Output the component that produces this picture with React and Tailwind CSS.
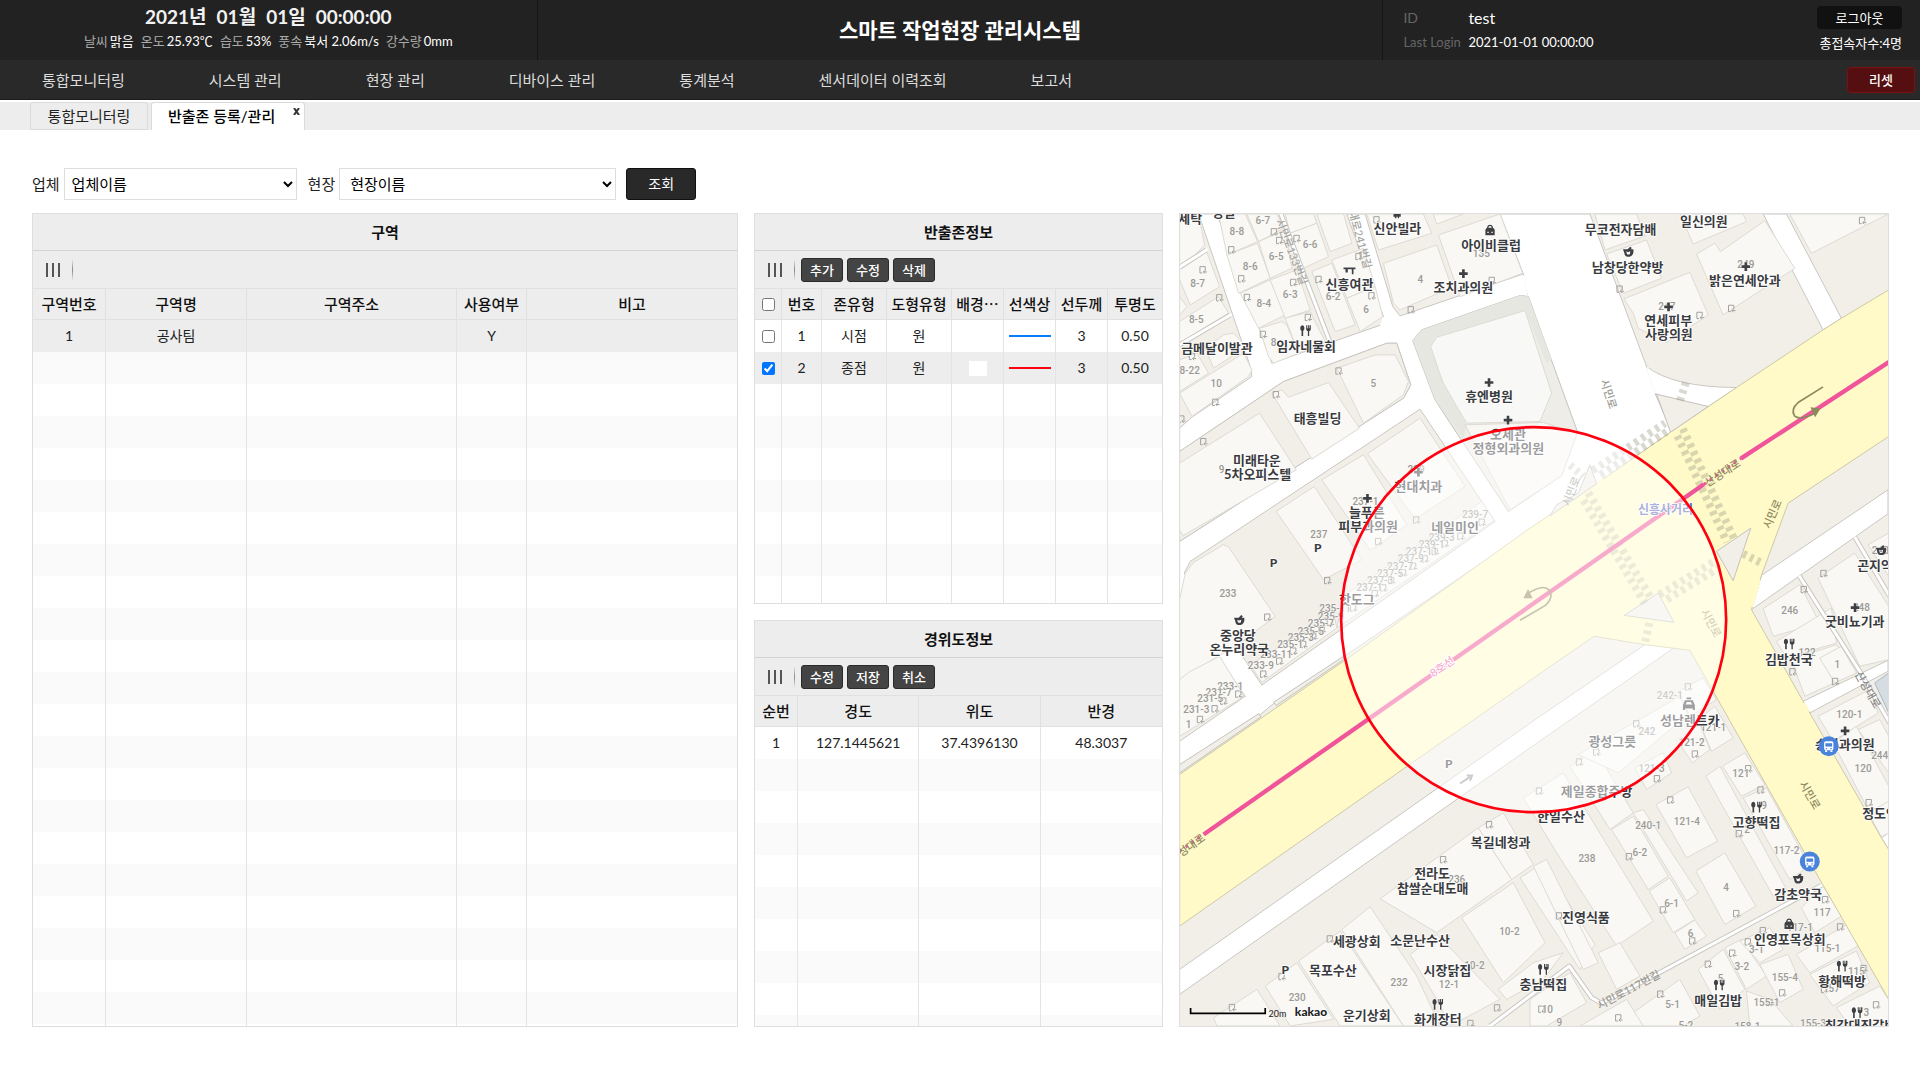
import { useState } from "react";

const menus = [
  "통합모니터링",
  "시스템 관리",
  "현장 관리",
  "디바이스 관리",
  "통계분석",
  "센서데이터 이력조회",
  "보고서",
];

const weather = [
  ["날씨", "맑음"],
  ["온도", "25.93℃"],
  ["습도", "53%"],
  ["풍속", "북서 2.06m/s"],
  ["강수량", "0mm"],
];

const initialZones = [
  { no: 1, type: "시점", shape: "원", bg: "", line: "#0a7cff", width: 3, opacity: "0.50", checked: false },
  { no: 2, type: "종점", shape: "원", bg: "#ffffff", line: "#ff0010", width: 3, opacity: "0.50", checked: true },
];

// ---------------------------------------------------------------- 지도 데이터

const roads = [
  // 시민로 (북쪽)
  "990,42 1260,42 1430,500 1455,580 1505,695 1225,892 1140,950 1110,970 1110,872 1175,828 1222,695 1075,290 1060,222",
  // 산성대로 옆길
  "28,1625 225,1490 275,1456 975,965 1015,935 1175,828 1225,892 520,1372 310,1512 270,1545 28,1702",
  // 골목길
  "28,1025 700,595 722,555 680,430 650,430 340,545 28,755 28,685 65,652 245,530 240,500 85,42 140,42 305,490 475,430 630,376 640,350 530,42 585,42 668,320 690,348 1060,222 1075,290 1050,287 755,390 728,422 795,600 1015,935 975,965 750,628 430,840 60,1085 42,1120 100,1200 275,1456 225,1490 70,1262 28,1200",
  "1780,42 1850,42 2015,355 1960,390",
  "1775,1127 2155,870 2155,942 1745,1230",
  "1900,1505 2155,1382 2155,1415 1920,1540",
  // 남쪽 길
  "28,2310 1110,1550 1430,1332 1512,1345 1080,1645 28,2385",
  "2135,1915 2157,1900 2157,1950",
];

const westBlock = "28,755 340,545 650,430 680,430 722,555 700,595 28,1025";

const yellowRoad =
  "28,1725 520,1385 1080,985 1225,890 1505,695 1700,563 1960,390 2015,355 2160,268 2160,708 1855,910 1775,1127 1745,1230 1900,1505 1920,1540 2135,1915 2160,1955 2160,2405 1950,2040 1560,1352 1425,1335 1272,1310 1110,1422 700,1708 28,2180";

const islands = [
  "1743,985 1640,1055 1690,1143",
  "1363,1247 1465,1180 1512,1268",
  "1460,583 1615,620 1502,697",
  "1260,795 1280,852 1225,890 1140,948 1160,915 1225,880",
  "310,1508 520,1370 520,1380 318,1518",
  "28,1695 266,1542 272,1552 28,1720",
];

const buildings = [
  "28,42 85,42 103,135 70,170 28,200",
  "28,205 108,152 148,260 60,315 28,240",
  "28,365 145,290 175,340 28,430",
  "28,290 50,320 28,345",
  "105,445 160,405 190,400 230,440 130,505",
  "28,480 80,460 115,520 28,575",
  "28,580 220,460 245,510 235,530 65,650",
  "145,42 225,42 262,125 170,165",
  "230,42 320,42 340,85 265,125",
  "170,165 262,130 300,235 205,280",
  "265,125 345,90 365,205 300,235",
  "210,280 300,240 345,345 265,385",
  "300,240 380,210 420,330 345,355",
  "268,385 335,365 350,375 385,460 310,490 295,470",
  "345,355 420,335 465,425 385,460",
  "345,42 430,42 440,70 360,100",
  "360,100 440,70 475,170 400,205",
  "440,42 520,42 545,130 480,155",
  "425,215 485,190 555,375 495,395",
  "485,180 580,145 615,260 530,295",
  "530,295 615,260 638,350 570,395",
  "590,42 760,42 785,100 625,150",
  "640,190 800,135 845,262 690,330 670,310",
  "790,42 880,42 800,72",
  "805,105 990,42 1058,220 870,290",
  "500,505 615,465 675,465 715,545 700,585 580,670",
  "305,580 335,570 355,592 475,548 568,685 425,778",
  "28,790 268,640 378,810 38,1008 28,990",
  "592,762 750,655 885,860 735,958",
  "455,840 580,765 710,975 600,1052",
  "318,935 432,860 575,1080 460,1140",
  "45,1120 70,1088 160,1035 175,1042 315,1250 210,1330 28,1440 28,1200",
  "28,1440 55,1418 148,1370 222,1490 28,1610",
  "240,1395 490,1240 500,1285 275,1448",
  "520,1190 935,905 972,962 500,1285",
  "1275,42 1400,42 1425,108 1305,150",
  "1310,162 1430,120 1475,235 1360,280",
  "1362,297 1560,217 1615,345 1490,428 1405,385 1390,340",
  "1530,42 1720,42 1730,65 1570,132",
  "1580,162 1635,130 1652,155 1785,62 1875,205 1660,345",
  "1860,42 2155,42 1925,160",
  "1780,1227 1890,1155 1950,1270 1810,1310",
  "1945,1135 2055,1060 2157,1220 2157,1380 2070,1400",
  "2095,1035 2157,1000 2157,1130",
  "1820,1325 1985,1225 2000,1330 1850,1375",
  "1865,1380 2000,1335 2060,1420 1905,1490",
  "1950,1375 2015,1340 2060,1420 1995,1450",
  "1945,1550 2100,1470 2125,1540 1990,1625",
  "1990,1630 2060,1580 2157,1760 2157,1820 2095,1830",
  "2065,1590 2130,1560 2157,1610 2157,1720",
  "2095,1840 2157,1805 2157,1900 2135,1912",
  // 남쪽 상가
  "630,2098 925,1885 1025,2040 800,2200",
  "925,1885 1000,1840 1090,1995 1025,2040",
  "1050,2035 1120,1990 1275,2235 1230,2310",
  "875,2155 1030,2050 1125,2230 1000,2350",
  "515,2190 600,2122 740,2330 810,2480 700,2480",
  "385,2285 510,2195 700,2480 510,2480",
  "285,2360 380,2290 490,2460 360,2480",
  "130,2455 260,2370 330,2480 140,2480",
  "720,2265 800,2205 990,2400 840,2480 800,2400",
  "985,2370 1090,2290 1180,2260 1120,2340 1010,2400",
  "1060,1795 1180,1720 1450,2165 1340,2240 1160,1960",
  "1200,1700 1275,1650 1390,1840 1320,1890",
  "1225,1665 1530,1490 1555,1545 1345,1720",
  "1525,1475 1600,1435 1640,1500 1560,1550",
  "1585,1560 1635,1520 1690,1615 1625,1655",
  "1520,1620 1590,1575 1620,1650 1568,1690",
  "1395,1705 1480,1660 1505,1720 1430,1770",
  "1658,1700 1725,1660 1785,1755 1715,1790",
  "1458,1815 1555,1762 1643,1925 1550,1975",
  "1608,1730 1650,1700 1850,2070 1810,2090",
  "1720,1795 1790,1765 1920,2000 1860,2040",
  "1578,2015 1665,1960 1758,2120 1665,2175",
  "1325,1890 1390,1850 1495,2030 1435,2070",
  "1390,1840 1420,1830 1585,2080 1550,2105",
  "1438,2075 1500,2035 1575,2160 1510,2200",
  "1515,2200 1575,2162 1610,2210 1545,2250",
  "1285,2260 1350,2230 1410,2330 1340,2370",
  "1090,2000 1130,1980 1285,2290 1240,2310",
  "1585,2310 1660,2250 1725,2370 1650,2430",
  "1665,2245 1715,2220 1790,2330 1730,2370",
  "1710,2225 1800,2185 1840,2250 1770,2290",
  "1770,2295 1855,2265 1900,2370 1830,2410",
  "1895,2125 1960,2060 2015,2150 1935,2200",
  "1880,2265 2040,2170 2065,2240 1920,2320",
  "1920,2325 2060,2255 2100,2350 1990,2420",
  "2000,2425 2130,2360 2157,2400 2157,2480 2040,2480",
  "1730,2375 1800,2400 1870,2480 1740,2480",
  "1390,2440 1530,2340 1590,2450 1540,2480 1410,2480",
  "1230,2480 1370,2400 1420,2480",
  "1080,2400 1200,2320 1250,2410 1130,2480 1080,2480",
];

const places = [
  [60, 68, "세탁"], [160, 50, "성일"], [682, 98, "신안빌라"], [963, 150, "아이비클럽"],
  [538, 268, "신흥여관"], [880, 276, "조치과의원"], [140, 460, "금메달이발관"], [408, 452, "임자네물회"],
  [957, 602, "휴엔병원"], [1014, 718, "오세관"], [1015, 760, "정형외과의원"], [442, 670, "태흥빌딩"],
  [260, 796, "미래타운"], [262, 838, "5차오피스텔"], [745, 875, "현대치과"], [590, 953, "늘푸른"],
  [594, 995, "피부과의원"], [855, 998, "네일미인"], [560, 1213, "핫도그"],
  [1352, 103, "무코전자담배"], [1373, 217, "남창당한약방"], [1602, 78, "일신의원"], [1725, 256, "밝은연세안과"],
  [1495, 375, "연세피부"], [1497, 418, "사랑의원"], [2134, 1112, "곤지약국"],
  [203, 1322, "중앙당"], [207, 1364, "온누리약국"], [992, 1943, "복길네청과"], [786, 2036, "전라도"],
  [788, 2080, "찹쌀순대도매"], [560, 2240, "세광상회"], [750, 2238, "소문난수산"], [488, 2328, "목포수산"],
  [832, 2328, "시장닭집"], [590, 2463, "운기상회"], [803, 2474, "화개장터"],
  [2055, 1280, "굿비뇨기과"], [1857, 1393, "김밥천국"], [1560, 1575, "성남렌트카"], [1327, 1640, "광성그릇"],
  [1280, 1790, "제일종합주방"], [1173, 1865, "한일수산"], [2025, 1648, "송치과의원"], [2131, 1855, "정도안"],
  [1760, 1883, "고향떡집"], [1885, 2100, "감초약국"], [1248, 2168, "진영식품"], [1860, 2235, "인영포목상회"],
  [2017, 2360, "황해떡방"], [1645, 2418, "매일김밥"], [1120, 2370, "충남떡집"], [2072, 2492, "최강대진갈비"],
];

const lots = [
  [278, 72, "6-7"], [200, 104, "8-8"], [318, 180, "6-5"], [420, 143, "6-6"], [240, 210, "8-6"],
  [82, 260, "8-7"], [281, 320, "8-4"], [360, 294, "6-3"], [78, 369, "8-5"], [489, 300, "6-2"],
  [588, 338, "6"], [751, 250, "4"], [934, 171, "135"], [58, 522, "8-22"], [138, 561, "10"],
  [610, 561, "5"], [154, 820, "9"], [310, 438, "8"], [446, 1014, "237"], [173, 1192, "233"],
  [738, 819, "239"], [586, 916, "237-1"], [915, 956, "239-7"], [815, 1024, "239-3"], [785, 1044, "239-1"],
  [755, 1066, "237-11"], [722, 1087, "237-9"], [690, 1110, "237-7"], [660, 1131, "237-5"], [630, 1153, "237-3"],
  [598, 1174, "237-1"], [495, 1237, "235-11"], [482, 1260, "235-9"], [452, 1283, "235-7"], [422, 1305, "235-5"],
  [392, 1325, "235-3"], [360, 1345, "235-1"], [318, 1374, "233-11"], [272, 1408, "233-9"], [180, 1470, "233-1"],
  [145, 1490, "231-7"], [120, 1508, "231-5"], [78, 1540, "231-3"], [55, 1584, "1"],
  [1728, 205, "249"], [1491, 331, "247"], [1860, 1243, "246"], [2075, 1235, "248"], [2132, 1062, "248"],
  [1912, 1368, "122"], [2003, 1405, "1"], [2039, 1555, "120-1"], [2080, 1718, "120"], [2130, 1678, "244"],
  [1500, 1498, "242-1"], [1431, 1606, "242"], [1630, 1595, "121-1"], [1565, 1640, "121-2"], [1445, 1718, "121-3"],
  [1713, 1733, "121"], [1783, 1829, "9"], [1732, 1902, "2"], [1551, 1877, "121-4"], [1435, 1889, "240-1"],
  [1251, 1988, "238"], [1410, 1971, "6-2"], [1850, 1964, "117-2"], [1669, 2076, "4"], [1505, 2123, "6-1"],
  [1562, 2212, "6"], [1957, 2150, "117"], [1890, 2194, "117-1"], [1973, 2258, "115-1"], [1760, 2261, "3-1"],
  [1716, 2312, "3-2"], [1845, 2345, "155-4"], [2060, 2328, "115"], [1790, 2421, "155-1"], [1508, 2427, "5-1"],
  [1652, 2348, "5"], [1985, 2378, "157"], [2090, 2451, "3"], [1930, 2482, "155-3"], [1733, 2492, "158-1"],
  [1548, 2490, "5-2"], [1132, 2441, "10"], [1168, 2480, "9"], [860, 2050, "236"], [1018, 2208, "10-2"],
  [913, 2310, "10-2"], [837, 2367, "12-1"], [687, 2360, "232"], [381, 2405, "230"],
];

// 건물 출입구
const gates = [
  [98, 210], [148, 294], [66, 470], [136, 608], [34, 658], [312, 96], [184, 150], [328, 122], [380, 116],
  [214, 237], [370, 248], [231, 293], [279, 404], [414, 353], [566, 170], [446, 239], [605, 288], [620, 60],
  [723, 330], [966, 242], [318, 585], [506, 514], [100, 726], [739, 961], [625, 1026], [472, 1143], [292, 1253],
  [936, 968], [872, 1010], [825, 1032], [795, 1056], [765, 1078], [730, 1100], [700, 1120], [664, 1143],
  [640, 1165], [615, 1182], [550, 1225], [480, 1268], [455, 1290], [430, 1310], [400, 1335], [370, 1355],
  [328, 1385], [280, 1424], [205, 1484], [160, 1505], [134, 1528], [90, 1560],
  [1350, 268], [1590, 347], [1685, 326], [2078, 62], [1962, 1122], [1903, 1170], [1869, 1417], [1997, 1446],
  [1555, 1462], [1400, 1573], [1280, 1658], [1228, 1688], [1108, 1775], [1576, 1664], [1462, 1738], [1736, 1708],
  [1773, 1772], [1502, 1802], [1708, 1903], [1378, 1972], [1700, 2143], [1480, 2132], [1568, 2225], [1168, 2150],
  [1967, 2101], [2012, 2183], [1780, 2194], [1735, 2228], [1688, 2262], [1615, 2295], [1472, 2385], [1346, 2456],
  [1838, 2381], [1964, 2371], [2082, 2308], [2120, 2417], [1800, 2410], [1115, 2430], [2098, 1810],
  [958, 1876], [820, 1981], [480, 2219], [335, 2332], [186, 2425], [982, 2426], [902, 2473],
];

const plusMarks = [[880, 221], [957, 548], [1014, 661], [745, 817], [592, 896], [1728, 200], [1496, 321], [2056, 1224], [2026, 1594]];
const foodMarks = [[406, 392], [1858, 1333], [803, 2415], [1760, 1823], [1120, 2310], [2017, 2300], [1648, 2357], [2062, 2440]];
const teaMarks = [[1375, 156], [207, 1262], [1885, 2038], [2134, 1052]];
const bagMarks = [[960, 92], [1858, 2175]];
const parkMarks = [[310, 1102], [443, 1057], [836, 1704], [345, 2325]];
const busStops = [[1977, 1640], [1920, 1986]];

const streetNames = [
  [1318, 582, 72, "시민로", "#9a9a94"],
  [1202, 874, -68, "시민로", "#9a9a94"],
  [1806, 942, -66, "시민로", "#8f8b62"],
  [1625, 1270, 62, "시민로", "#a8a470"],
  [1922, 1786, 60, "시민로", "#8f8b62"],
  [1657, 818, -33, "산성대로", "#8f8b62"],
  [62, 1936, -36, "성대로", "#8f8b62"],
  [2096, 1470, 60, "산성대로", "#8a8a8a"],
  [1375, 2370, -28, "시민로117번길", "#9a9a94"],
  [366, 155, 69, "시민로133번길", "#a5a5a0"],
  [572, 118, 75, "대로241번길", "#a5a5a0"],
];

const crosswalks = [
  [1275, 822, 1492, 680],
  [1528, 692, 1682, 1022],
  [1245, 885, 1435, 1205],
  [1475, 1195, 1640, 1095],
];

// 엇갈린 두 줄의 횡단보도
function Crosswalk({ x1, y1, x2, y2 }) {
  const length = Math.hypot(x2 - x1, y2 - y1);
  const angle = (Math.atan2(y2 - y1, x2 - x1) * 180) / Math.PI;
  return (
    <g
      transform={`translate(${x1} ${y1}) rotate(${angle})`}
      stroke="#9c9a86"
      strokeOpacity="0.38"
      strokeWidth="23"
      strokeDasharray="12 13"
    >
      <path d={`M0 -12H${length}`} />
      <path d={`M12 12H${length}`} />
    </g>
  );
}

function ZoneMap() {
  return (
    <svg
      className="block h-full w-full font-['Lato','Noto_Sans_CJK_KR',sans-serif]"
      viewBox="28 42 2128 2438"
      preserveAspectRatio="xMidYMid slice"
      role="img"
      aria-label="반출존 지도"
    >
      <rect x="0" y="0" width="2200" height="2520" fill="#f2efe9" />

      {/* 도로 */}
      <g fill="#ffffff" stroke="#c9c7c2" strokeWidth="3" strokeLinejoin="round">
        {roads.map((points) => (
          <polygon key={points} points={points} />
        ))}
        <path d="M1430 500Q1510 562 1700 563L1615 620Q1530 615 1458 582Z" />
        <polygon points={westBlock} fill="#f2efe9" />
      </g>
      <polygon points="1108,874 1222,700 1300,640 1480,680 1225,892 1112,968" fill="#fff" />
      <path d="M1078 292L1060 226M1432 502L1456 580M976 964L1014 936M227 1489L273 1457M632 376L640 352" stroke="#fff" strokeWidth="6" />

      {/* 병원 부지 */}
      <polygon
        points="728,422 755,390 1050,287 1075,290 1222,695 1175,828 1015,935 795,600"
        fill="#eeede7"
        stroke="#cccac4"
        strokeWidth="3"
      />
      <path d="M728 422L755 390L1050 287L1075 290L1145 480L1130 490L1065 332L800 410L780 440L890 670L880 715L795 600Z" fill="#e6e7e0" />

      {/* 건물 */}
      <g fill="#f9f8f5" stroke="#dddad3" strokeWidth="3" strokeLinejoin="round">
        {buildings.map((points) => (
          <polygon key={points} points={points} />
        ))}
        <path d="M782 440L800 412L1065 332L1145 580L1110 665L890 670L860 620L820 550L808 518Z" fill="#f8f8f6" />
        <path d="M885 675L1120 668L1222 700L1175 828L1020 930Z" fill="#f8f7f3" />
        <polygon points="2115,1450 2157,1420 2157,1540" fill="#d5dde3" stroke="#a9b8c4" />
      </g>

      {/* 좁은 길 */}
      <g fill="none" strokeLinejoin="round">
        <g stroke="#c9c7c2" strokeWidth="15">
          <path d="M960 2480L1198 2300L1265 2395L1295 2412L1450 2330L1955 2058" />
          <path d="M1888 1128L2070 1415L2160 1570" />
          <path d="M2055 1012L2160 1190" />
          <path d="M28 202L108 150M28 435L180 345" />
          <path d="M332 42L480 428" />
        </g>
        <g stroke="#ffffff" strokeWidth="9">
          <path d="M955 2484L1198 2300L1265 2395L1295 2412L1450 2330L1960 2055" />
          <path d="M1888 1128L2070 1415L2160 1570" />
          <path d="M2055 1012L2160 1190" />
          <path d="M24 204L112 148M24 437L184 343" />
          <path d="M330 36L482 434" />
        </g>
      </g>

      {/* 산성대로 */}
      <polygon points={yellowRoad} fill="#fffac8" stroke="#cdc9a6" strokeWidth="3" />
      <path d="M1226 888L1300 838M1747 1222L1770 1140M1903 1510L1918 1536" stroke="#fffac8" strokeWidth="6" />
      <g fill="#f2efe9" stroke="#c4c2bc" strokeWidth="3">
        {islands.map((points) => (
          <polygon key={points} points={points} />
        ))}
      </g>
      {crosswalks.map(([x1, y1, x2, y2]) => (
        <Crosswalk key={x1} x1={x1} y1={y1} x2={x2} y2={y2} />
      ))}
      <g stroke="#9c9a86" strokeOpacity="0.38" strokeWidth="24" strokeDasharray="11 12">
        <path d="M1548 548L1530 604" />
        <path d="M1720 1062L1775 1090" />
        <path d="M1438 1270L1425 1332" />
        <path d="M1200 796L1240 830" />
      </g>

      {/* 8호선 */}
      <path d="M100 1905L1600 855L1715 775L2160 485" fill="none" stroke="#f0559b" strokeWidth="13" />
      <path d="M28 1955L100 1905" stroke="#f0559b" strokeWidth="9" strokeDasharray="8 14" />
      <path d="M1602 854L1713 776" stroke="#fffac8" strokeWidth="16" />
      <path d="M1602 854L1713 776" stroke="#f0559b" strokeWidth="9" strokeDasharray="8 14" />
      <g fill="none" stroke="#8d895f" strokeWidth="5">
        <path d="M1960 561L1885 608Q1862 628 1874 648Q1890 664 1940 638" />
        <path d="M1050 1262L1125 1218Q1152 1195 1138 1172Q1120 1150 1070 1184" />
      </g>
      <path d="M1922 622L1952 626L1936 652ZM1060 1196L1074 1168L1088 1196Z" fill="#8d895f" />
      <path d="M870 1752L900 1732M890 1728L906 1728L900 1744" fill="none" stroke="#999" strokeWidth="6" />

      {/* 출입구 */}
      <g fill="none" stroke="#a3a29e" strokeWidth="3">
        {gates.map(([x, y]) => (
          <path key={`${x}-${y}`} d={`M${x - 2} ${y + 9}H${x - 9}V${y - 10}H${x + 7}V${y + 2}M${x + 12} ${y + 6}H${x + 1}M${x + 6} ${y + 1}L${x + 1} ${y + 6}L${x + 6} ${y + 11}`} />
        ))}
      </g>

      {/* 지번 */}
      <g
        className="font-['Roboto',sans-serif]"
        fill="#9b9a97"
        stroke="#f9f8f5"
        strokeWidth="3"
        paintOrder="stroke"
        fontSize="30"
        fontWeight="500"
        textAnchor="middle"
      >
        {lots.map(([x, y, text]) => (
          <text key={`${x}-${y}`} x={x} y={y}>
            {text}
          </text>
        ))}
      </g>

      {/* 도로명 */}
      <g fontSize="33" fontWeight="500" textAnchor="middle" dominantBaseline="central">
        {streetNames.map(([x, y, angle, text, color]) => (
          <text key={`${x}-${y}`} transform={`translate(${x} ${y}) rotate(${angle})`} fill={color}>
            {text}
          </text>
        ))}
        <text transform="translate(815 1400) rotate(-34)" fill="#ee4f97" stroke="#fff" strokeWidth="6" paintOrder="stroke">
          8호선
        </text>
      </g>

      {/* 상호 아이콘 */}
      <g fill="#3f4043" stroke="#ffffff" strokeWidth="3" paintOrder="stroke">
        {plusMarks.map(([x, y]) => (
          <path key={x} d={`M${x - 4} ${y - 13}h8v9h9v8h-9v9h-8v-9h-9v-8h9z`} />
        ))}
        {foodMarks.map(([x, y]) => (
          <path
            key={x}
            d={`M${x - 10} ${y - 16}a7 9 0 0 1 3 17v15h-5v-15a7 9 0 0 1 2 -17zM${x + 2} ${y - 16}h3v9h2v-9h3v9h2v-9h4v12q0 5 -5 6v14h-4v-14q-5 -1 -5 -6z`}
          />
        ))}
        {teaMarks.map(([x, y]) => (
          <path
            key={x}
            fillRule="evenodd"
            d={`M${x - 16} ${y - 8}h14l8 -8l5 4l-4 4h8q2 8 -1 14q-4 8 -10 8h-8q-7 -1 -8 -12zM${x - 6} ${y - 2}q5 5 12 0l-1 8q-5 3 -9 0z`}
          />
        ))}
        {bagMarks.map(([x, y]) => (
          <path
            key={x}
            fillRule="evenodd"
            d={`M${x - 14} ${y + 14}v-17q2 -5 5 -6q1 -9 9 -9t9 9q3 1 5 6v17zM${x - 5} ${y - 9}h10q0 -5 -5 -5t-5 5zM${x - 8} ${y + 3}v4h4v-4zM${x + 4} ${y + 3}v4h4v-4z`}
          />
        ))}
        <path d="M520 203h36v5h-6v15h-5v-15h-12v10h-7v-10h-6zM670 42h22v8h-5v5h-4v-5h-4v5h-5v-5h-4z" />
        <path
          fillRule="evenodd"
          d="M1539 1531v-14l6 -15h24l6 15v14h-6v-4h-24v4zM1547 1515h20l-4 -8h-12zM1550 1494h14v5h-14z"
        />
      </g>

      {/* 상호 */}
      <g fill="#3a3b3e" stroke="#ffffff" strokeWidth="5" paintOrder="stroke" fontSize="39" fontWeight="700" textAnchor="middle" strokeLinejoin="round">
        {places.map(([x, y, text]) => (
          <text key={`${x}-${y}`} x={x} y={y}>
            {text}
          </text>
        ))}
        {parkMarks.map(([x, y]) => (
          <text key={x} x={x} y={y} fontSize="36" fontWeight="900">
            P
          </text>
        ))}
        <text x="1487" y="942" fontSize="36" fill="#5462b4">
          신흥사거리
        </text>
      </g>

      {/* 버스 정류장 */}
      {busStops.map(([x, y]) => (
        <g key={x} transform={`translate(${x} ${y})`}>
          <circle r="30" fill="#4a83dc" />
          <rect x="-14" y="-15" width="28" height="27" rx="5" fill="#fff" />
          <rect x="-10" y="-9" width="20" height="10" fill="#4a83dc" />
          <path d="M-11 12h6v5h-6zM5 12h6v5h-6z" fill="#fff" />
          <path d="M-9 5h4v4h-4zM5 5h4v4h-4z" fill="#4a83dc" />
        </g>
      ))}

      {/* 반출존 */}
      <circle cx="1091" cy="1260" r="578" fill="#ffffff" fillOpacity="0.5" stroke="#ff0010" strokeWidth="8" />

      {/* 축척 */}
      <path d="M61 2426V2442H285V2426" fill="none" stroke="#000" strokeWidth="5" />
      <text x="295" y="2452" fontSize="27" fill="#222">
        20m
      </text>
      <text x="374" y="2450" fontSize="36" fontWeight="900" fill="#222" stroke="#fff" strokeWidth="5" paintOrder="stroke">
        kakao
      </text>
    </svg>
  );
}

// ---------------------------------------------------------------- 공통 컴포넌트

function PanelTitle({ children }) {
  return (
    <h2 className="flex h-[37px] shrink-0 items-center justify-center border-b border-[#d2d2d2] bg-[#ededed] text-[15px] font-bold text-[#111]">
      {children}
    </h2>
  );
}

function Toolbar({ buttons = [] }) {
  return (
    <div className="flex h-[38px] shrink-0 items-center border-b border-[#e0e0e0] bg-[#ededed] pl-3">
      <svg className="h-[14px] w-[15px]" viewBox="0 0 15 14" aria-hidden="true">
        <path d="M2 0v14M8 0v14M14 0v14" stroke="#555" strokeWidth="2" />
      </svg>
      <span className="mr-[6px] ml-3 h-[22px] w-px bg-linear-to-b from-transparent via-[#888] to-transparent"></span>
      <div className="flex gap-1">
        {buttons.map((label) => (
          <button
            key={label}
            type="button"
            className="h-6 w-[42px] rounded-[3px] border border-[#2a2a2a] bg-[#444] text-[13px] leading-[20px] font-medium text-white"
          >
            {label}
          </button>
        ))}
      </div>
    </div>
  );
}

const thClass =
  "h-[31px] border-r border-b border-[#e0e0e0] bg-[#ededed] p-0 text-center text-[15px] leading-[20px] font-medium whitespace-nowrap text-[#111] last:border-r-0";
const tdClass = "h-8 border-r border-[#e4e4e4] p-0 text-center text-[14px] leading-[20px] text-[#222] last:border-r-0";

// 빈 줄로 표를 끝까지 채운다
function EmptyRows({ cols, start, count }) {
  return Array.from({ length: count }, (_, row) => (
    <tr key={row} className={(row + start) % 2 ? "bg-[#fafafa]" : "bg-white"}>
      {Array.from({ length: cols }, (_, col) => (
        <td key={col} className={tdClass}></td>
      ))}
    </tr>
  ));
}

function AreaPanel() {
  return (
    <section className="flex min-h-0 flex-col overflow-hidden border border-[#dedede]">
      <PanelTitle>구역</PanelTitle>
      <Toolbar />
      <div className="min-h-0 flex-1 overflow-hidden">
        <table className="w-full table-fixed border-separate border-spacing-0">
          <colgroup>
            <col className="w-[73px]" />
            <col className="w-[141px]" />
            <col className="w-[210px]" />
            <col className="w-[70px]" />
            <col />
          </colgroup>
          <thead>
            <tr>
              {["구역번호", "구역명", "구역주소", "사용여부", "비고"].map((name) => (
                <th key={name} className={thClass}>
                  {name}
                </th>
              ))}
            </tr>
          </thead>
          <tbody>
            <tr className="bg-[#ededed]">
              <td className={tdClass}>1</td>
              <td className={tdClass}>공사팀</td>
              <td className={tdClass}></td>
              <td className={tdClass}>Y</td>
              <td className={tdClass}></td>
            </tr>
            <EmptyRows cols={5} start={1} count={22} />
          </tbody>
        </table>
      </div>
    </section>
  );
}

function ZonePanel() {
  const [zones, setZones] = useState(initialZones);

  const toggle = (no) => {
    setZones(zones.map((zone) => (zone.no === no ? { ...zone, checked: !zone.checked } : zone)));
  };

  const toggleAll = (e) => {
    setZones(zones.map((zone) => ({ ...zone, checked: e.target.checked })));
  };

  return (
    <section className="flex min-h-0 flex-[391_1_0%] flex-col overflow-hidden border border-[#dedede]">
      <PanelTitle>반출존정보</PanelTitle>
      <Toolbar buttons={["추가", "수정", "삭제"]} />
      <div className="min-h-0 flex-1 overflow-hidden">
        <table className="w-full table-fixed border-separate border-spacing-0">
          <colgroup>
            <col className="w-[27px]" />
            <col className="w-10" />
            <col className="w-[65px]" />
            <col className="w-[65px]" />
            <col className="w-[52px]" />
            <col className="w-[52px]" />
            <col className="w-[52px]" />
            <col />
          </colgroup>
          <thead>
            <tr>
              <th className={thClass}>
                <input
                  type="checkbox"
                  aria-label="전체 선택"
                  className="mx-auto block"
                  checked={zones.every((zone) => zone.checked)}
                  onChange={toggleAll}
                />
              </th>
              {["번호", "존유형", "도형유형", "배경⋯", "선색상", "선두께", "투명도"].map((name) => (
                <th key={name} className={thClass}>
                  {name}
                </th>
              ))}
            </tr>
          </thead>
          <tbody>
            {zones.map((zone) => (
              <tr key={zone.no} className={zone.checked ? "bg-[#ededed]" : "bg-white"}>
                <td className={tdClass}>
                  <input
                    type="checkbox"
                    aria-label={`${zone.no}번 선택`}
                    className="mx-auto block"
                    checked={zone.checked}
                    onChange={() => toggle(zone.no)}
                  />
                </td>
                <td className={tdClass}>{zone.no}</td>
                <td className={tdClass}>{zone.type}</td>
                <td className={tdClass}>{zone.shape}</td>
                <td className={tdClass}>
                  {zone.bg && <div className="mx-auto h-[15px] w-[18px]" style={{ backgroundColor: zone.bg }}></div>}
                </td>
                <td className={tdClass}>
                  <div className="mx-auto h-[2px] w-[42px]" style={{ backgroundColor: zone.line }}></div>
                </td>
                <td className={tdClass}>{zone.width}</td>
                <td className={tdClass}>{zone.opacity}</td>
              </tr>
            ))}
            <EmptyRows cols={8} start={2} count={10} />
          </tbody>
        </table>
      </div>
    </section>
  );
}

function CoordPanel() {
  return (
    <section className="flex min-h-0 flex-[407_1_0%] flex-col overflow-hidden border border-[#dedede]">
      <PanelTitle>경위도정보</PanelTitle>
      <Toolbar buttons={["수정", "저장", "취소"]} />
      <div className="min-h-0 flex-1 overflow-hidden">
        <table className="w-full table-fixed border-separate border-spacing-0">
          <colgroup>
            <col className="w-[43px]" />
            <col />
            <col />
            <col />
          </colgroup>
          <thead>
            <tr>
              {["순번", "경도", "위도", "반경"].map((name) => (
                <th key={name} className={thClass}>
                  {name}
                </th>
              ))}
            </tr>
          </thead>
          <tbody>
            <tr>
              <td className={tdClass}>1</td>
              <td className={tdClass}>127.1445621</td>
              <td className={tdClass}>37.4396130</td>
              <td className={tdClass}>48.3037</td>
            </tr>
            <EmptyRows cols={4} start={1} count={10} />
          </tbody>
        </table>
      </div>
    </section>
  );
}

function Header() {
  return (
    <header>
      <div className="grid h-[60px] grid-cols-[28fr_44fr_28fr] bg-[#222] text-white">
        <div className="flex flex-col items-center border-r border-[#151515] pt-1">
          <p className="flex gap-[10px] text-[19px] leading-[26px] font-bold text-[#f2f2f2]">
            <span>2021년</span>
            <span>01월</span>
            <span>01일</span>
            <span>00:00:00</span>
          </p>
          <p className="flex gap-[7px] text-[13px] leading-[22px]">
            {weather.map(([label, value]) => (
              <span key={label} className="flex gap-[2px]">
                <span className="text-[#aaa]">{label}</span>
                <span>{value}</span>
              </span>
            ))}
          </p>
        </div>
        <h1 className="flex items-center justify-center text-[21px] font-bold">스마트 작업현장 관리시스템</h1>
        <div className="flex justify-between border-l border-[#151515] pr-[18px] pl-5">
          <dl className="grid grid-cols-[65px_auto] content-start pt-[6px]">
            <dt className="text-[14px] leading-6 text-[#666]">ID</dt>
            <dd className="text-[16px] leading-6">test</dd>
            <dt className="text-[13px] leading-6 text-[#666]">Last Login</dt>
            <dd className="text-[13px] leading-6">2021-01-01 00:00:00</dd>
          </dl>
          <div className="flex flex-col items-end gap-1 pt-[6px]">
            <button type="button" className="h-[23px] w-[85px] rounded-[4px] bg-[#111] text-[13px] leading-[20px]">
              로그아웃
            </button>
            <p className="text-[13px] leading-[20px]">총접속자수:4명</p>
          </div>
        </div>
      </div>

      <nav className="flex h-10 items-center justify-between border-b border-[#1c1c1c] bg-[#292929] pr-[5px] text-[#ddd]">
        <ul className="flex">
          {menus.map((menu) => (
            <li key={menu}>
              <a href="#" className="block px-[42px] text-[15px] leading-[20px] whitespace-nowrap">
                {menu}
              </a>
            </li>
          ))}
        </ul>
        <button
          type="button"
          className="h-[26px] w-[68px] rounded-[4px] border border-[#7a1012] bg-[#560f11] text-[13px] leading-[20px] font-medium text-white"
        >
          리셋
        </button>
      </nav>
    </header>
  );
}

export default function App() {
  return (
    <div className="flex min-h-screen flex-col bg-white font-['Lato','Noto_Sans_CJK_KR',sans-serif] text-[#222]">
      <Header />

      {/* 탭 */}
      <div className="mt-[2px] flex h-7 gap-[3px] bg-[#ededed] pl-[30px]">
        <a
          href="#"
          className="flex w-[118px] items-center justify-center rounded-t-[3px] border border-[#dadada] text-[15px] leading-[20px]"
        >
          통합모니터링
        </a>
        <div className="flex w-[154px] items-start justify-between rounded-t-[3px] border-x border-t border-[#dadada] bg-white pr-1 pl-4">
          <a href="#" className="text-[15px] leading-[26px] font-medium text-black">
            반출존 등록/관리
          </a>
          <button type="button" aria-label="탭 닫기" className="pt-[5px]">
            <svg className="h-[7px] w-[7px]" viewBox="0 0 7 7" aria-hidden="true">
              <path d="M1 0L6 7M6 0L1 7" stroke="#333" strokeWidth="2" />
            </svg>
          </button>
        </div>
      </div>

      {/* 검색 조건 */}
      <form className="flex items-center px-8 pt-[38px] pb-[13px]" onSubmit={(e) => e.preventDefault()}>
        <label htmlFor="company" className="mr-1 text-[15px] leading-[20px]">
          업체
        </label>
        <select id="company" className="h-8 w-[233px] border border-[#ddd] bg-white px-[3px] text-[15px] text-black">
          <option>업체이름</option>
        </select>
        <label htmlFor="site" className="mr-1 ml-[11px] text-[15px] leading-[20px]">
          현장
        </label>
        <select id="site" className="h-8 w-[277px] border border-[#ddd] bg-white pr-[3px] pl-[6px] text-[15px] text-black">
          <option>현장이름</option>
        </select>
        <button
          type="submit"
          className="ml-[10px] h-8 w-[70px] rounded-[3px] border border-[#111] bg-[#292929] text-[14px] leading-[20px] text-white"
        >
          조회
        </button>
      </form>

      <main className="grid h-[calc(100vh-266px)] grid-cols-[706fr_409fr_710fr] grid-rows-[minmax(0,1fr)] gap-4 pr-[31px] pl-8">
        <AreaPanel />
        <div className="flex min-h-0 flex-col gap-4">
          <ZonePanel />
          <CoordPanel />
        </div>
        <section className="min-h-0 overflow-hidden border border-[#dedede]">
          <ZoneMap />
        </section>
      </main>
    </div>
  );
}
